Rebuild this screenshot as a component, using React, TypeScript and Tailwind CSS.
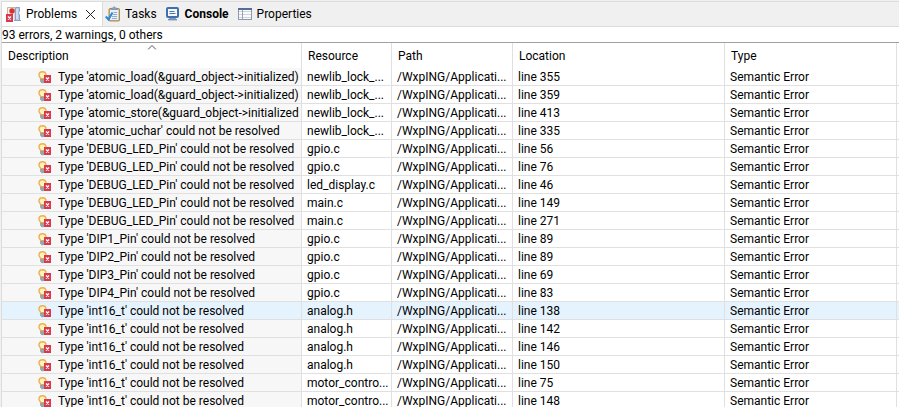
import { useState } from "react";
import { cva } from "class-variance-authority";
import clsx from "clsx";

interface Problem {
  description: string;
  resource: string;
  line: number;
}

const problems: Problem[] = [
  { description: "Type 'atomic_load(&guard_object->initialized)", resource: "newlib_lock_...", line: 355 },
  { description: "Type 'atomic_load(&guard_object->initialized)", resource: "newlib_lock_...", line: 359 },
  { description: "Type 'atomic_store(&guard_object->initialized", resource: "newlib_lock_...", line: 413 },
  { description: "Type 'atomic_uchar' could not be resolved", resource: "newlib_lock_...", line: 335 },
  { description: "Type 'DEBUG_LED_Pin' could not be resolved", resource: "gpio.c", line: 56 },
  { description: "Type 'DEBUG_LED_Pin' could not be resolved", resource: "gpio.c", line: 76 },
  { description: "Type 'DEBUG_LED_Pin' could not be resolved", resource: "led_display.c", line: 46 },
  { description: "Type 'DEBUG_LED_Pin' could not be resolved", resource: "main.c", line: 149 },
  { description: "Type 'DEBUG_LED_Pin' could not be resolved", resource: "main.c", line: 271 },
  { description: "Type 'DIP1_Pin' could not be resolved", resource: "gpio.c", line: 89 },
  { description: "Type 'DIP2_Pin' could not be resolved", resource: "gpio.c", line: 89 },
  { description: "Type 'DIP3_Pin' could not be resolved", resource: "gpio.c", line: 69 },
  { description: "Type 'DIP4_Pin' could not be resolved", resource: "gpio.c", line: 83 },
  { description: "Type 'int16_t' could not be resolved", resource: "analog.h", line: 138 },
  { description: "Type 'int16_t' could not be resolved", resource: "analog.h", line: 142 },
  { description: "Type 'int16_t' could not be resolved", resource: "analog.h", line: 146 },
  { description: "Type 'int16_t' could not be resolved", resource: "analog.h", line: 150 },
  { description: "Type 'int16_t' could not be resolved", resource: "motor_contro...", line: 75 },
  { description: "Type 'int16_t' could not be resolved", resource: "motor_contro...", line: 148 },
];

const ErrorMark = ({ x, y }: { x: number; y: number }) => (
  <g transform={`translate(${x} ${y})`}>
    <rect width="7" height="8" fill="#d9394b" />
    <path d="M2 2.500l3 3M5 2.500l-3 3" stroke="#fff" strokeWidth="1.4" />
  </g>
);

const ProblemsIcon = () => (
  <svg width="16" height="16" viewBox="0 0 16 16" aria-hidden="true">
    <path d="M1.5 9V1.5h7.5V15" fill="#eef3fb" stroke="#c9b98f" />
    <path d="M9.5 1.5h4V5q-2 1.5 0 4v5.5h-4z" fill="#b9cbe6" stroke="#8ba3c9" />
    <path d="M11 3v10" stroke="#eaf1fb" />
    <path d="M8 14.5h7" stroke="#8ba3c9" />
    <circle cx="6" cy="5" r="2.7" fill="#e0302a" />
    <ErrorMark x={0} y={8} />
  </svg>
);

const TasksIcon = () => (
  <svg width="16" height="16" viewBox="0 0 16 16" aria-hidden="true">
    <rect x="4" y="2.5" width="10.5" height="12.5" rx="1" fill="#c9ad7c" stroke="#a98b58" />
    <rect x="5" y="4" width="8.5" height="10" fill="#e9f0fa" />
    <path d="M6.5 3.5V2H8L9.2.5 10.5 2H12v1.5z" fill="#8fa6c4" stroke="#6e88ab" strokeWidth=".6" />
    <path d="M8.5 6.5H12M8 8.5h4M7 10.5h5M7 12.5h5" stroke="#8eabd2" />
    <path d="M.8 10.5l2.700 3L7.500 6.500" fill="none" stroke="#2f86d1" strokeWidth="2" />
  </svg>
);

const ConsoleIcon = () => (
  <svg width="16" height="16" viewBox="0 0 16 16" aria-hidden="true">
    <rect x="2" y="2" width="11" height="9" rx="1" fill="#f4f8fe" stroke="#3f6fae" strokeWidth="2" />
    <path d="M4.5 5.5h5M4.5 7.5h6" stroke="#4a74ad" />
    <path d="M4.5 12.5h6L12 14H3z" fill="#7f98bd" stroke="#5b7caa" strokeWidth=".6" />
  </svg>
);

const PropertiesIcon = () => (
  <svg width="16" height="16" viewBox="0 0 16 16" aria-hidden="true">
    <rect x="1.5" y="2.5" width="13" height="11" fill="#fbfcfe" stroke="#8f97a8" />
    <path d="M1 3h14" stroke="#566c96" strokeWidth="2" />
    <path d="M2 5.5h12M2 8.5h12M2 11.5h12" stroke="#ced4de" />
    <path d="M5.5 4v9" stroke="#98a3b8" />
  </svg>
);

const QuickFixIcon = () => (
  <svg width="13" height="13" viewBox="0 0 13 13" className="shrink-0" aria-hidden="true">
    <path
      d="M4.500.7C2.300.7 1 2.200 1 4c0 1.500 1.200 2.200 1.700 3.700h3.600C6.800 6.200 8 5.500 8 4 8 2.200 6.700.7 4.500.7z"
      fill="#fdf1c4"
      stroke="#ebb24a"
      strokeWidth="1.4"
    />
    <path d="M2.500 8.300h4v2l-1 1.500h-2l-1-1.500z" fill="#9ba5b0" stroke="#77828e" strokeWidth=".5" />
    <ErrorMark x={6} y={4} />
  </svg>
);

const tabStyle = cva("flex h-6 items-center text-[12px]", {
  variants: {
    active: {
      true: "border-r border-[#dcdcdc] bg-white",
      false: "",
    },
  },
});

const tabs = [
  { id: "tasks", label: "Tasks", icon: <TasksIcon /> },
  { id: "console", label: "Console", icon: <ConsoleIcon />, updated: true },
  { id: "properties", label: "Properties", icon: <PropertiesIcon /> },
];

const TabBar = () => (
  <div role="tablist" className="flex h-[26px] shrink-0 border-y border-[#dcdcdc] bg-[#f0f0f0]">
    <div className={clsx(tabStyle({ active: true }), "gap-2 pl-1 pr-1.5")}>
      <button role="tab" aria-selected="true" className="flex items-center gap-1">
        <ProblemsIcon />
        <span className="whitespace-nowrap">Problems</span>
      </button>
      <button aria-label="Close">
        <svg width="11" height="11" viewBox="0 0 11 11" aria-hidden="true">
          <path d="M1 1l9 9M10 1l-9 9" stroke="#222" />
        </svg>
      </button>
    </div>
    <div className="flex gap-2 pl-0.5">
      {tabs.map((tab) => (
        <button
          key={tab.id}
          role="tab"
          aria-selected="false"
          className={clsx(tabStyle({ active: false }), "gap-1", tab.updated && "font-bold")}
        >
          {tab.icon}
          <span className="whitespace-nowrap">{tab.label}</span>
        </button>
      ))}
    </div>
  </div>
);

const columns = ["Description", "Resource", "Path", "Location", "Type"];

const cell = "overflow-hidden whitespace-nowrap border-b border-r border-[#e0e0e0] p-0 pl-[5px] pt-0.5";

const ProblemsTable = () => {
  const [selected, setSelected] = useState(13);

  return (
    <table className="w-full table-fixed border-separate border-spacing-0 text-left leading-[15px]">
      <colgroup>
        <col className="w-[300px]" />
        <col className="w-[90px]" />
        <col className="w-[121px]" />
        <col className="w-[212px]" />
        <col className="w-[172px]" />
        <col />
      </colgroup>
      <thead>
        <tr className="h-[25px]">
          {columns.map((name) => (
            <th key={name} className="relative border-r border-[#e0e0e0] p-0 pl-1.5 pt-0.5 font-normal">
              {name}
              {name === "Description" && (
                <svg width="9" height="5" viewBox="0 0 9 5" className="absolute left-1/2 top-0.5 -translate-x-1/2" aria-hidden="true">
                  <path d="M.5 4.5l4-4 4 4" fill="none" stroke="#555" />
                </svg>
              )}
            </th>
          ))}
          <td />
        </tr>
      </thead>
      <tbody>
        {problems.map((problem, i) => (
          <tr
            key={i}
            onClick={() => setSelected(i)}
            className={clsx("h-[18px]", i === selected && "bg-[#e5f3ff]")}
          >
            <td className={clsx(cell, i !== selected && "bg-[#f7f7f7]")}>
              <div className="flex items-center gap-[7px] pl-[31px]">
                <QuickFixIcon />
                <span>{problem.description}</span>
              </div>
            </td>
            <td className={cell}>{problem.resource}</td>
            <td className={cell}>/WxpING/Applicati...</td>
            <td className={cell}>line {problem.line}</td>
            <td className={cell}>Semantic Error</td>
            <td className="border-b border-[#e0e0e0] p-0" />
          </tr>
        ))}
      </tbody>
    </table>
  );
};

export default function App() {
  return (
    <div className="flex h-screen flex-col overflow-hidden bg-[#f0f0f0] pt-px pl-px font-[Roboto,'Open_Sans',sans-serif] text-[12px] leading-[17px] text-black">
      <main className="flex min-h-0 flex-1 flex-col border-l border-[#dcdcdc] bg-white">
        <TabBar />
        <p className="h-4 shrink-0 border-b border-[#a0a0a0]">93 errors, 2 warnings, 0 others</p>
        <ProblemsTable />
      </main>
    </div>
  );
}
